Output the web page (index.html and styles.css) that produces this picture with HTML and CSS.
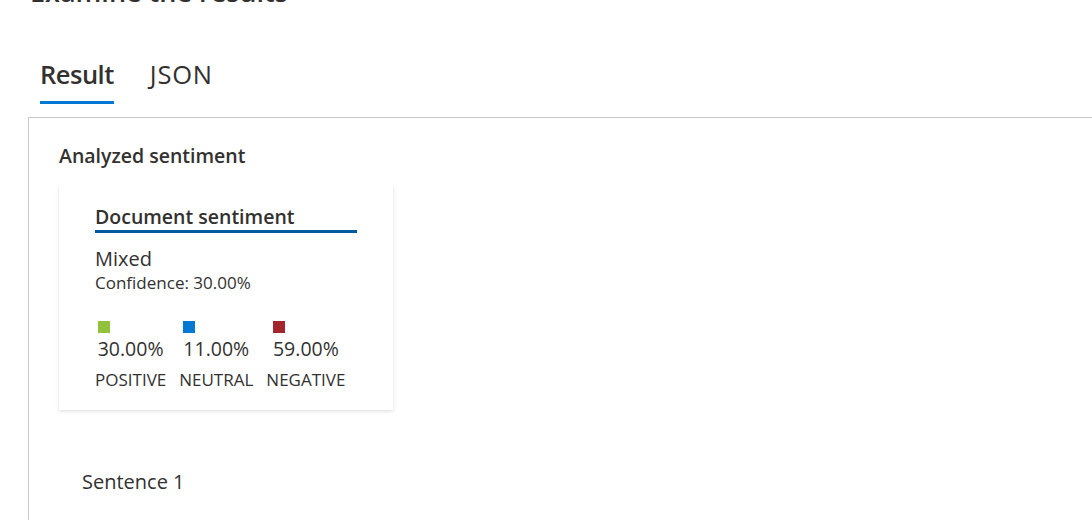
FILE: index.html
```html
<!DOCTYPE html>
<html>
<head>
<meta charset="utf-8">
<link rel="stylesheet" href="styles.css">
</head>
<body>
<div class="page">
  <h1 class="page-title">Examine the results</h1>
  <div class="tabs">
    <div class="tab tab-active">Result</div>
    <div class="tab">JSON</div>
  </div>
  <div class="panel">
    <h2 class="section-title">Analyzed sentiment</h2>
    <div class="card">
      <div class="card-title">Document sentiment</div>
      <div class="sentiment">Mixed</div>
      <div class="confidence">Confidence: 30.00%</div>
      <div class="scores">
        <div class="score">
          <div class="score-value"><span class="swatch swatch-pos"></span>30.00%</div>
          <div class="score-label">POSITIVE</div>
        </div>
        <div class="score">
          <div class="score-value"><span class="swatch swatch-neu"></span>11.00%</div>
          <div class="score-label">NEUTRAL</div>
        </div>
        <div class="score">
          <div class="score-value"><span class="swatch swatch-neg"></span>59.00%</div>
          <div class="score-label">NEGATIVE</div>
        </div>
      </div>
    </div>
    <div class="sentence">Sentence 1</div>
  </div>
</div>
</body>
</html>
```
FILE: styles.css
```css
html, body {
  margin: 0;
  padding: 0;
  background: #ffffff;
  overflow: hidden;
}
body {
  font-family: "Open Sans", "Noto Sans", sans-serif;
  color: #323130;
}
.page {
  width: 1092px;
  height: 520px;
  overflow: hidden;
}
.page-title {
  margin: -25px 0 0 30px;
  font-size: 27px;
  font-weight: 600;
  line-height: 34px;
  color: #323130;
}
.tabs {
  display: flex;
  gap: 36px;
  margin: 50px 0 0 40px;
}
.tab {
  font-size: 25.5px;
  line-height: 30px;
  padding-bottom: 12px;
  border-bottom: 3px solid transparent;
  color: #323130;
  letter-spacing: 0.8px;
}
.tab-active {
  font-weight: 600;
  letter-spacing: -0.5px;
  border-bottom-color: #0078d4;
}
.panel {
  margin-left: 28px;
  margin-top: 13px;
  width: 1100px;
  height: 420px;
  border-top: 1px solid #c8c8c8;
  border-left: 1px solid #c8c8c8;
  padding: 25px 0 0 30px;
  box-sizing: border-box;
}
.section-title {
  margin: 0;
  font-size: 19.5px;
  font-weight: 600;
  line-height: 26px;
}
.card {
  margin-top: 15px;
  width: 334px;
  height: 226px;
  box-sizing: border-box;
  padding: 20px 0 0 36px;
  background: #fff;
  box-shadow: 0 1.6px 3.6px rgba(0,0,0,0.13), 0 0.3px 0.9px rgba(0,0,0,0.11);
}
.card-title {
  width: 262px;
  font-size: 19.5px;
  font-weight: 600;
  line-height: 26px;
  border-bottom: 3px solid #005a9e;
}
.sentiment {
  margin-top: 13px;
  font-size: 20px;
  line-height: 26px;
}
.confidence {
  font-size: 17px;
  line-height: 22px;
}
.scores {
  display: flex;
  gap: 13px;
  margin-top: 27px;
}
.score {
  display: flex;
  flex-direction: column;
  align-items: center;
}
.score-value {
  display: flex;
  flex-direction: column;
  align-items: flex-start;
  font-size: 19.5px;
  line-height: 26px;
}
.swatch {
  display: block;
  width: 12px;
  height: 12px;
  margin-bottom: 3px;
}
.swatch-pos { background: #92c13b; }
.swatch-neu { background: #0078d4; }
.swatch-neg { background: #a4262c; }
.score-label {
  margin-top: 7px;
  font-size: 17px;
  line-height: 22px;
}
.sentence {
  margin: 59px 0 0 23px;
  font-size: 20px;
  line-height: 26px;
}
```
